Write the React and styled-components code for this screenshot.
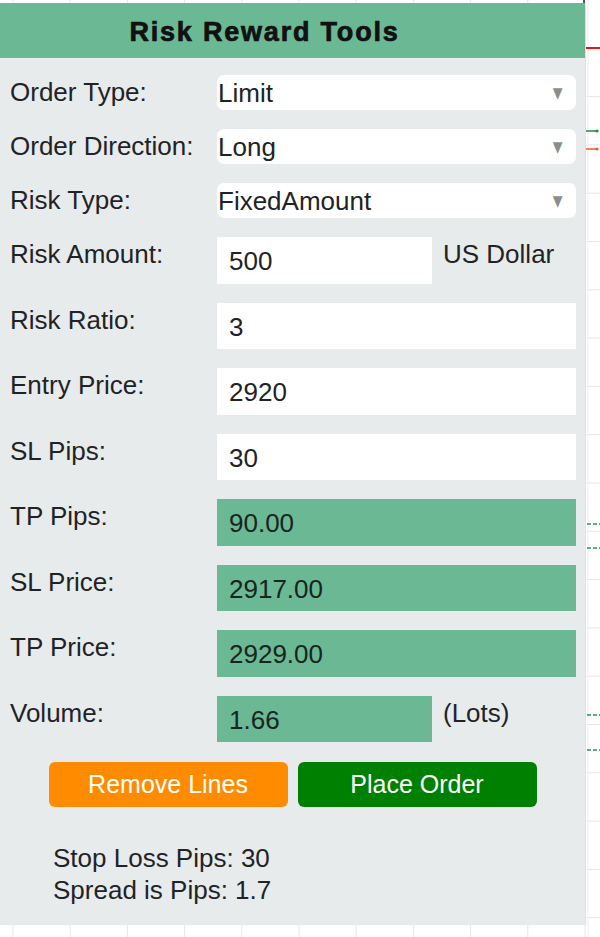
import React, { useState } from 'react'
import styled, { createGlobalStyle } from 'styled-components'

const GlobalStyle = createGlobalStyle`
  body {
    margin: 0;
    background: #ffffff;
    font-family: "Liberation Sans", Arial, sans-serif;
  }
`

const Page = styled.div`
  position: relative;
  width: 600px;
  height: 937px;
  overflow: hidden;
  background: #ffffff;
`

const Chart = styled.svg`
  position: absolute;
  left: 0;
  top: 0;
  width: 600px;
  height: 937px;
`

const Panel = styled.div`
  position: relative;
  width: 585px;
  margin-top: 3px;
  padding-bottom: 19px;
  background: #e8ebec;
  color: #1f2326;
  box-shadow: 1px 0 0 #dfe2e3;
`

const Header = styled.div`
  height: 55px;
  display: flex;
  align-items: center;
  justify-content: center;
  padding-right: 56px;
  padding-top: 3px;
  box-sizing: border-box;
  background: #6bb895;
`

const Title = styled.h1`
  margin: 0;
  font-size: 27px;
  font-weight: 700;
  letter-spacing: 1.8px;
  color: #111;
  -webkit-text-stroke: 0.7px #111;
`

const Form = styled.div`
  display: flex;
  flex-direction: column;
  gap: 19px;
  padding: 17px 9px 0 0;
`

const Row = styled.div`
  display: flex;
  align-items: flex-start;
`

const Label = styled.label`
  flex: 0 0 217px;
  box-sizing: border-box;
  padding-left: 10px;
  font-size: 26px;
  line-height: 34px;
  white-space: nowrap;
`

const SelectBox = styled.div`
  position: relative;
  flex: 1;
  height: 35px;
`

const Select = styled.select`
  appearance: none;
  width: 100%;
  height: 100%;
  border: none;
  border-radius: 7px;
  background: #ffffff;
  padding: 0 0 0 1px;
  font-family: inherit;
  font-size: 26px;
  color: #1f2326;
  outline: none;
`

const Arrow = styled.span`
  position: absolute;
  right: 12px;
  top: 50%;
  transform: translateY(-50%) scaleX(0.85);
  font-family: "DejaVu Sans", sans-serif;
  font-size: 15px;
  color: #8c8c8c;
  pointer-events: none;
`

const Input = styled.input`
  box-sizing: border-box;
  width: ${p => (p.$narrow ? '215px' : '100%')};
  flex: ${p => (p.$narrow ? '0 0 215px' : '1')};
  height: 46.5px;
  border: none;
  padding: 3px 12px 0;
  background: ${p => (p.$calc ? '#6bb895' : '#ffffff')};
  font-family: inherit;
  font-size: 26px;
  color: ${p => (p.$calc ? '#17251e' : '#1f2326')};
  outline: none;
`

const Unit = styled.span`
  margin-left: 11px;
  font-size: 26px;
  line-height: 34px;
  white-space: nowrap;
`

const Buttons = styled.div`
  display: flex;
  justify-content: center;
  gap: 10px;
  margin-top: 20px;
`

const Button = styled.button`
  width: 239px;
  height: 45px;
  border: none;
  border-radius: 6px;
  background: ${p => p.$bg};
  color: #ffffff;
  font-family: inherit;
  font-size: 25px;
  cursor: pointer;
`

const Info = styled.div`
  margin-top: 35px;
  padding-left: 53px;
  font-size: 26px;
  line-height: 32px;
`

function ChartBackdrop() {
  const rows = []
  for (let k = 1; k < 20; k++) rows.push(k * 48.3)
  const cols = []
  for (let k = 0; k < 11; k++) cols.push(13 + k * 57.2)

  return (
    <Chart viewBox='0 0 600 937'>
      {rows.map(y => (
        <line key={'h' + y} x1='0' x2='600' y1={y} y2={y} stroke='#e6e6e6' strokeWidth='1' />
      ))}
      {cols.map(x => (
        <line key={'v' + x} x1={x} x2={x} y1='0' y2='937' stroke='#e6e6e6' strokeWidth='1' />
      ))}
      <line x1='588' x2='588' y1='0' y2='937' stroke='#eeeeee' strokeWidth='1' />
      <line x1='584' x2='584' y1='0' y2='4' stroke='#222' strokeWidth='1.5' />
      <line x1='585' x2='600' y1='48' y2='48' stroke='#e8141c' strokeWidth='2' />
      <line x1='585' x2='597' y1='131' y2='131' stroke='#1e8a4c' strokeWidth='1.5' />
      <circle cx='597' cy='131' r='1.6' fill='#1e8a4c' />
      <line x1='585' x2='597' y1='149' y2='149' stroke='#ee5a2a' strokeWidth='1.5' />
      <circle cx='597' cy='149' r='1.6' fill='#ee5a2a' />
      {[524, 548, 715, 750].map(y => (
        <line key={'d' + y} x1='587' x2='600' y1={y} y2={y} stroke='#2f8f5e'
          strokeWidth='1.3' strokeDasharray='4 2' />
      ))}
    </Chart>
  )
}

export default function App() {
  const [orderType, setOrderType] = useState('Limit')
  const [direction, setDirection] = useState('Long')
  const [riskType, setRiskType] = useState('FixedAmount')

  return (
    <Page>
      <GlobalStyle />
      <ChartBackdrop />
      <Panel>
        <Header>
          <Title>Risk Reward Tools</Title>
        </Header>

        <Form>
          <Row>
            <Label>Order Type:</Label>
            <SelectBox>
              <Select value={orderType} onChange={e => setOrderType(e.target.value)}>
                <option>Limit</option>
                <option>Market</option>
                <option>Stop</option>
              </Select>
              <Arrow>▼</Arrow>
            </SelectBox>
          </Row>
          <Row>
            <Label>Order Direction:</Label>
            <SelectBox>
              <Select value={direction} onChange={e => setDirection(e.target.value)}>
                <option>Long</option>
                <option>Short</option>
              </Select>
              <Arrow>▼</Arrow>
            </SelectBox>
          </Row>
          <Row>
            <Label>Risk Type:</Label>
            <SelectBox>
              <Select value={riskType} onChange={e => setRiskType(e.target.value)}>
                <option>FixedAmount</option>
                <option>Percentage</option>
              </Select>
              <Arrow>▼</Arrow>
            </SelectBox>
          </Row>

          <Row>
            <Label>Risk Amount:</Label>
            <Input $narrow defaultValue='500' />
            <Unit>US Dollar</Unit>
          </Row>
          <Row>
            <Label>Risk Ratio:</Label>
            <Input defaultValue='3' />
          </Row>
          <Row>
            <Label>Entry Price:</Label>
            <Input defaultValue='2920' />
          </Row>
          <Row>
            <Label>SL Pips:</Label>
            <Input defaultValue='30' />
          </Row>
          <Row>
            <Label>TP Pips:</Label>
            <Input $calc readOnly value='90.00' />
          </Row>
          <Row>
            <Label>SL Price:</Label>
            <Input $calc readOnly value='2917.00' />
          </Row>
          <Row>
            <Label>TP Price:</Label>
            <Input $calc readOnly value='2929.00' />
          </Row>
          <Row>
            <Label>Volume:</Label>
            <Input $calc $narrow readOnly value='1.66' />
            <Unit>(Lots)</Unit>
          </Row>
        </Form>

        <Buttons>
          <Button $bg='#ff8c00'>Remove Lines</Button>
          <Button $bg='#008000'>Place Order</Button>
        </Buttons>

        <Info>
          <div>Stop Loss Pips: 30</div>
          <div>Spread is Pips: 1.7</div>
        </Info>
      </Panel>
    </Page>
  )
}
